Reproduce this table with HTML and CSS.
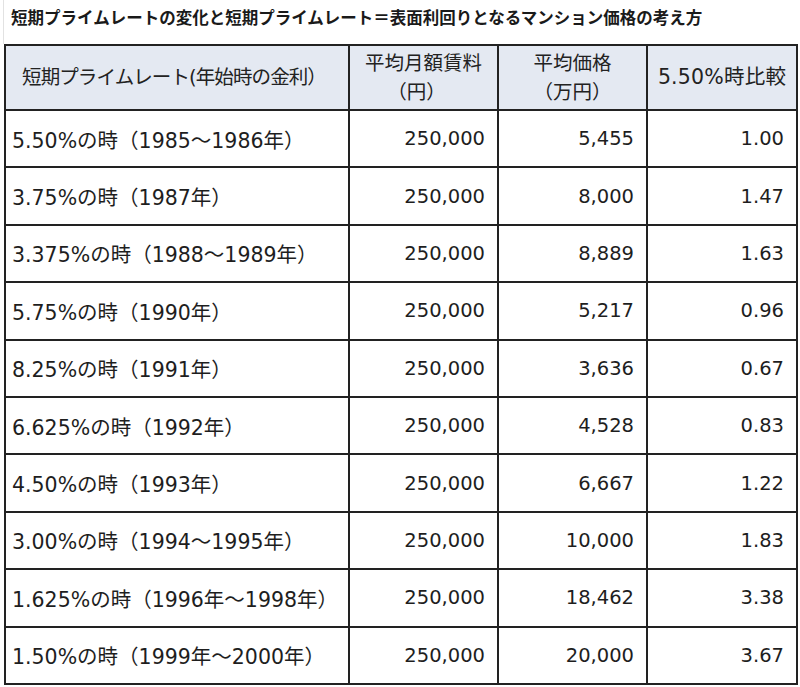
FILE: index.html
```html
<!DOCTYPE html>
<html lang="ja">
<head>
<meta charset="utf-8">
<title>短期プライムレート</title>
<link rel="stylesheet" href="styles.css">
</head>
<body>
<div class="title">短期プライムレートの変化と短期プライムレート＝表面利回りとなるマンション価格の考え方</div>
<table class="rates">
  <colgroup>
    <col class="c1"><col class="c2"><col class="c3"><col class="c4">
  </colgroup>
  <thead>
    <tr>
      <th class="h-rate">短期プライムレート(年始時の金利）</th>
      <th>平均月額賃料<br><span class="unit-yen">（円）</span></th>
      <th>平均価格<br>（万円）</th>
      <th class="h-ratio">5.50%時比較</th>
    </tr>
  </thead>
  <tbody>
    <tr><td>5.50%の時（1985～1986年）</td><td class="n">250,000</td><td class="n">5,455</td><td class="n">1.00</td></tr>
    <tr><td>3.75%の時（1987年）</td><td class="n">250,000</td><td class="n">8,000</td><td class="n">1.47</td></tr>
    <tr><td>3.375%の時（1988～1989年）</td><td class="n">250,000</td><td class="n">8,889</td><td class="n">1.63</td></tr>
    <tr><td>5.75%の時（1990年）</td><td class="n">250,000</td><td class="n">5,217</td><td class="n">0.96</td></tr>
    <tr><td>8.25%の時（1991年）</td><td class="n">250,000</td><td class="n">3,636</td><td class="n">0.67</td></tr>
    <tr><td>6.625%の時（1992年）</td><td class="n">250,000</td><td class="n">4,528</td><td class="n">0.83</td></tr>
    <tr><td>4.50%の時（1993年）</td><td class="n">250,000</td><td class="n">6,667</td><td class="n">1.22</td></tr>
    <tr><td>3.00%の時（1994～1995年）</td><td class="n">250,000</td><td class="n">10,000</td><td class="n">1.83</td></tr>
    <tr><td>1.625%の時（1996年～1998年）</td><td class="n">250,000</td><td class="n">18,462</td><td class="n">3.38</td></tr>
    <tr><td>1.50%の時（1999年～2000年）</td><td class="n">250,000</td><td class="n">20,000</td><td class="n">3.67</td></tr>
  </tbody>
</table>
</body>
</html>
```
FILE: styles.css
```css
html, body {
  margin: 0;
  padding: 0;
  background: #ffffff;
}
body {
  font-family: "Noto Sans CJK JP", "Noto Sans", sans-serif;
  color: #1e1e1e;
}
.title {
  margin-left: 3px;
  border-left: 1px solid #e2e2e2;
  height: 44px;
  box-sizing: border-box;
  padding: 6px 0 0 7px;
  font-size: 16.5px;
  line-height: 22px;
  font-weight: bold;
  color: #1a1a1a;
  white-space: nowrap;
}
.rates {
  margin-left: 4px;
  border-collapse: collapse;
  table-layout: fixed;
  width: 792px;
  font-family: "DejaVu Sans", "Noto Sans CJK JP", sans-serif;
}
.c1 { width: 344px; }
.c2 { width: 149px; }
.c3 { width: 149px; }
.c4 { width: 150px; }
.rates th, .rates td {
  border: 2px solid #222222;
  font-size: 19.5px;
  font-weight: normal;
  padding: 0;
  white-space: nowrap;
}
.rates th {
  background: #e4e9f2;
  height: 63px;
  line-height: 29px;
  text-align: center;
  color: #222222;
}
.rates th.h-rate {
  letter-spacing: -0.9px;
  padding-right: 6px;
}
.rates th.h-ratio {
  font-size: 20.5px;
  letter-spacing: 0.2px;
}
.unit-yen {
  margin-right: 14px;
}
.rates td {
  height: 55.4px;
  padding-left: 6px;
  text-align: left;
  font-size: 20.5px;
}
.rates td.n {
  text-align: right;
  padding-right: 12px;
  padding-left: 0;
  font-size: 19.5px;
}
```
